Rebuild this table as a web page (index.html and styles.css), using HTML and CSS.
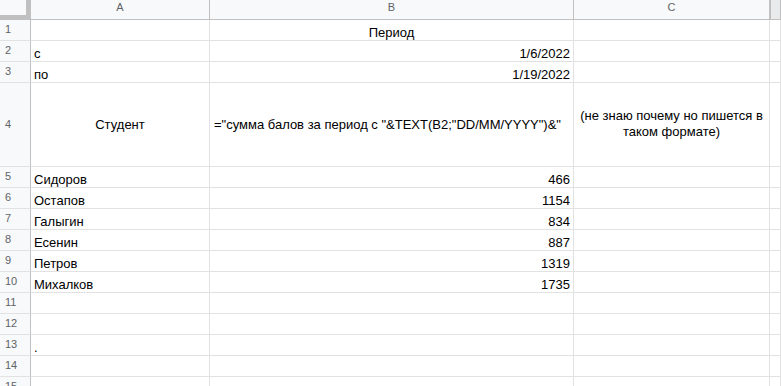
FILE: index.html
```html
<!DOCTYPE html>
<html lang="ru">
<head>
<meta charset="utf-8">
<title>Sheet</title>
<link rel="stylesheet" href="styles.css">
</head>
<body>
<div class="sheet">
  <div class="corner"></div>
  <div class="colhead">A</div>
  <div class="colhead">B</div>
  <div class="colhead">C</div>
  <div class="colhead colhead-d"></div>

  <div class="rowhead">1</div>
  <div class="cell"></div>
  <div class="cell center">Период</div>
  <div class="cell"></div>
  <div class="cell"></div>

  <div class="rowhead">2</div>
  <div class="cell">с</div>
  <div class="cell right">1/6/2022</div>
  <div class="cell"></div>
  <div class="cell"></div>

  <div class="rowhead">3</div>
  <div class="cell">по</div>
  <div class="cell right">1/19/2022</div>
  <div class="cell"></div>
  <div class="cell"></div>

  <div class="rowhead">4</div>
  <div class="cell middle center">Студент</div>
  <div class="cell middle overflow">="сумма балов за период с "&amp;TEXT(B2;"DD/MM/YYYY")&amp;"</div>
  <div class="cell middle center wrap">(не знаю почему но пишется в<br>таком формате)</div>
  <div class="cell"></div>

  <div class="rowhead">5</div>
  <div class="cell">Сидоров</div>
  <div class="cell right">466</div>
  <div class="cell"></div>
  <div class="cell"></div>

  <div class="rowhead">6</div>
  <div class="cell">Остапов</div>
  <div class="cell right">1154</div>
  <div class="cell"></div>
  <div class="cell"></div>

  <div class="rowhead">7</div>
  <div class="cell">Галыгин</div>
  <div class="cell right">834</div>
  <div class="cell"></div>
  <div class="cell"></div>

  <div class="rowhead">8</div>
  <div class="cell">Есенин</div>
  <div class="cell right">887</div>
  <div class="cell"></div>
  <div class="cell"></div>

  <div class="rowhead">9</div>
  <div class="cell">Петров</div>
  <div class="cell right">1319</div>
  <div class="cell"></div>
  <div class="cell"></div>

  <div class="rowhead">10</div>
  <div class="cell">Михалков</div>
  <div class="cell right">1735</div>
  <div class="cell"></div>
  <div class="cell"></div>

  <div class="rowhead">11</div>
  <div class="cell"></div>
  <div class="cell"></div>
  <div class="cell"></div>
  <div class="cell"></div>

  <div class="rowhead">12</div>
  <div class="cell"></div>
  <div class="cell"></div>
  <div class="cell"></div>
  <div class="cell"></div>

  <div class="rowhead">13</div>
  <div class="cell">.</div>
  <div class="cell"></div>
  <div class="cell"></div>
  <div class="cell"></div>

  <div class="rowhead">14</div>
  <div class="cell"></div>
  <div class="cell"></div>
  <div class="cell"></div>
  <div class="cell"></div>

  <div class="rowhead">15</div>
  <div class="cell"></div>
  <div class="cell"></div>
  <div class="cell"></div>
  <div class="cell"></div>
</div>
</body>
</html>
```

FILE: styles.css
```css
html, body {
  margin: 0;
  padding: 0;
  background: #ffffff;
  overflow: hidden;
}

.sheet {
  display: grid;
  grid-template-columns: 31px 179px 364px 196px 1fr;
  grid-template-rows: 20px 21px 21px 21px 84px 21px 21px 21px 21px 21px 21px 21px 21px 21px 21px 21px;
  width: 781px;
  font-family: "Liberation Sans", Arial, sans-serif;
  font-size: 13px;
  color: #000;
}

.sheet > div {
  box-sizing: border-box;
  min-width: 0;
}

.corner {
  background: #f8f9fa;
  border-right: 5px solid #c0c0c0;
  border-bottom: 5px solid #c0c0c0;
  height: 20px;
}

.colhead {
  background: #f8f9fa;
  border-right: 1px solid #c0c0c0;
  border-bottom: 1px solid #c0c0c0;
  color: #5f6368;
  font-size: 11px;
  line-height: 15px;
  text-align: center;
  padding-top: 0;
}

.colhead-d {
  background: #e9eaec;
  border-left: 1px solid #c0c0c0;
}

.rowhead {
  background: #f8f9fa;
  border-right: 1px solid #c0c0c0;
  border-bottom: 1px solid #e2e2e2;
  color: #5f6368;
  font-size: 11px;
  display: flex;
  align-items: center;
  padding-left: 5px;
  padding-bottom: 2px;
}

.cell {
  border-right: 1px solid #e2e2e2;
  border-bottom: 1px solid #e2e2e2;
  display: flex;
  align-items: flex-end;
  padding: 0 3px;
  line-height: 15px;
  white-space: nowrap;
  overflow: hidden;
}

.center {
  justify-content: center;
  text-align: center;
}

.right {
  justify-content: flex-end;
}

.middle {
  align-items: center;
}

.overflow {
  overflow: visible;
  padding-left: 4px;
}

.wrap {
  white-space: normal;
  line-height: 16px;
  padding-bottom: 2px;
}
```
